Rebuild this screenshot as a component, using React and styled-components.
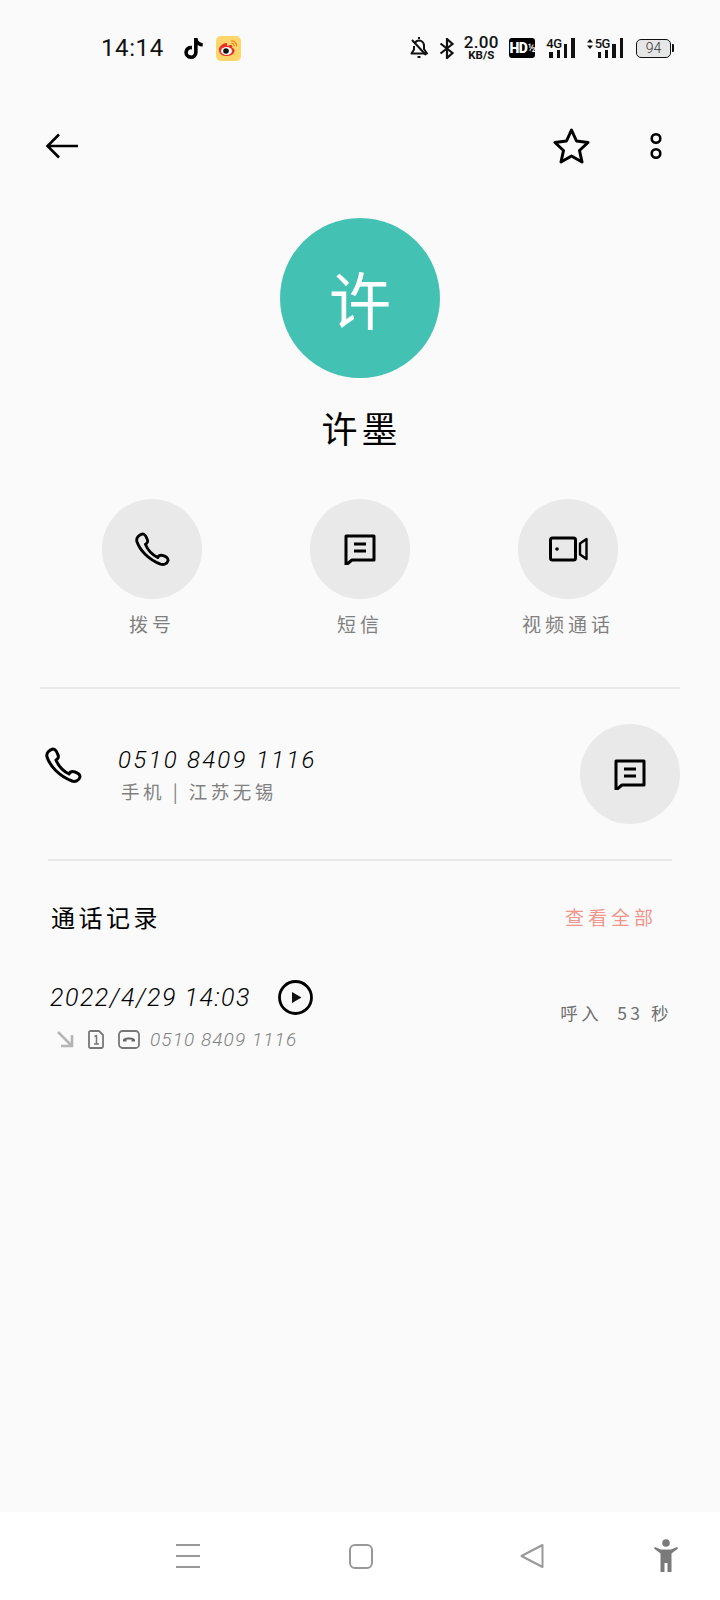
import React from 'react'
import styled, { createGlobalStyle } from 'styled-components'
import { FaTiktok } from 'react-icons/fa'

const Global = createGlobalStyle`
    html, body { margin: 0; padding: 0; background: #fafafa; }
    body { font-family: "Noto Sans CJK SC", "Noto Sans", sans-serif; }
`

const Page = styled.div`
    width: 720px;
    height: 1600px;
    background: #fafafa;
    display: flex;
    flex-direction: column;
    overflow: hidden;
    color: #000;
`

const StatusBar = styled.div`
    height: 96px;
    flex: none;
    display: flex;
    align-items: center;
    padding: 0 46px 0 101px;
`

const Time = styled.span`
    font-family: Roboto, sans-serif;
    font-size: 24px;
    letter-spacing: 0.6px;
    color: #111;
    margin-right: 19px;
`

const StatusRight = styled.div`
    margin-left: auto;
    display: flex;
    align-items: center;
`

const Speed = styled.div`
    width: 36px;
    margin: 0 10px 0 8px;
    display: flex;
    flex-direction: column;
    align-items: center;
    font-family: Roboto, sans-serif;
    color: #111;
    line-height: 1;
`

const SpeedValue = styled.span`
    font-size: 17px;
    font-weight: 500;
    letter-spacing: 0.3px;
    height: 15px;
    line-height: 15px;
`

const SpeedUnit = styled.span`
    font-size: 11.5px;
    font-weight: 700;
    height: 11px;
    line-height: 11px;
`

const HdBadge = styled.div`
    width: 26px;
    height: 20px;
    border-radius: 3px;
    background: #000;
    color: #fff;
    display: flex;
    align-items: center;
    justify-content: center;
    font-family: Roboto, sans-serif;
    font-size: 14px;
    font-weight: 900;
    letter-spacing: -0.6px;
    margin-right: 11px;
`

const HdFraction = styled.span`
    font-size: 10px;
    font-weight: 700;
    margin-left: 1px;
`

const Signal = styled.div`
    display: flex;
    align-items: flex-end;
    height: 20px;
    margin-right: ${p => p.$gap}px;
`

const SignalLabel = styled.span`
    align-self: flex-start;
    display: flex;
    align-items: center;
    gap: 2px;
    font-family: Roboto, sans-serif;
    font-size: 13px;
    font-weight: 500;
    letter-spacing: -0.5px;
    line-height: 12px;
    margin-right: -16px;
    color: #111;
`

const SignalBar = styled.span`
    width: 3.4px;
    height: ${p => p.$h}px;
    background: #111;
    margin-left: 3.9px;
`

const Battery = styled.div`
    display: flex;
    align-items: center;
`

const BatteryBody = styled.div`
    width: 33px;
    height: 17px;
    border: 1.5px solid #111;
    border-radius: 5px;
    background: #e6e6e6;
    font-family: Roboto, sans-serif;
    font-size: 14px;
    font-weight: 300;
    color: #333;
    display: flex;
    align-items: center;
    justify-content: center;
`

const BatteryNub = styled.span`
    width: 2px;
    height: 8px;
    background: #111;
    margin-left: 1px;
    border-radius: 0 1px 1px 0;
`

const Header = styled.div`
    height: 100px;
    flex: none;
    display: flex;
    align-items: center;
    padding: 0 58px 0 45px;
`

const HeaderRight = styled.div`
    margin-left: auto;
    display: flex;
    align-items: center;
    gap: 60px;
`

const Profile = styled.div`
    display: flex;
    flex-direction: column;
    align-items: center;
    padding-top: 22px;
`

const Avatar = styled.div`
    width: 160px;
    height: 160px;
    border-radius: 50%;
    background: #43c2b4;
    color: #fff;
    font-size: 62px;
    display: flex;
    align-items: center;
    justify-content: center;
`

const Name = styled.div`
    margin-top: 19px;
    height: 60px;
    line-height: 60px;
    font-size: 36px;
    letter-spacing: 4px;
    padding-left: 3px;
`

const Actions = styled.div`
    margin: 42px 48px 0;
    display: grid;
    grid-template-columns: repeat(3, 208px);
`

const Action = styled.div`
    display: flex;
    flex-direction: column;
    align-items: center;
`

const RoundButton = styled.div`
    width: 100px;
    height: 100px;
    flex: none;
    border-radius: 50%;
    background: #e9e9e9;
    display: flex;
    align-items: center;
    justify-content: center;
`

const ActionLabel = styled.span`
    margin-top: 10px;
    height: 30px;
    line-height: 30px;
    font-size: 19px;
    letter-spacing: 4px;
    color: #808080;
`

const Divider = styled.div`
    height: 2px;
    flex: none;
    background: #e8e8e8;
    margin: ${p => p.$top}px ${p => p.$right}px 0 ${p => p.$left}px;
`

const Contact = styled.div`
    margin-top: 35px;
    height: 100px;
    display: flex;
    padding: 0 40px 0 45px;
    align-items: flex-start;
`

const ContactIcon = styled.div`
    width: 37px;
    height: 37px;
    margin-top: 23px;
    flex: none;
`

const ContactText = styled.div`
    margin: 22px 0 0 36px;
    flex: 1;
    display: flex;
    flex-direction: column;
`

const Number = styled.span`
    height: 28px;
    line-height: 28px;
    font-family: Roboto, sans-serif;
    font-style: italic;
    font-weight: 300;
    font-size: 24px;
    letter-spacing: 2.3px;
    color: #000;
`

const Location = styled.span`
    margin: 3px 0 0 3px;
    height: 28px;
    line-height: 28px;
    font-size: 18.5px;
    letter-spacing: 3.5px;
    color: #808080;
`

const HistoryHead = styled.div`
    margin-top: 37px;
    height: 36px;
    display: flex;
    align-items: center;
    justify-content: space-between;
    padding: 0 63px 0 51px;
`

const HistoryTitle = styled.span`
    font-size: 24px;
    letter-spacing: 3.5px;
`

const ViewAll = styled.span`
    font-size: 19px;
    letter-spacing: 4px;
    color: #f0968c;
`

const Record = styled.div`
    margin-top: 46px;
    display: flex;
    align-items: center;
    justify-content: space-between;
    padding: 0 48px 0 50px;
`

const RecordMain = styled.div`
    display: flex;
    flex-direction: column;
    gap: 13px;
`

const RecordTop = styled.div`
    height: 34px;
    display: flex;
    align-items: center;
    gap: 27px;
`

const RecordDate = styled.span`
    font-family: Roboto, sans-serif;
    font-style: italic;
    font-weight: 300;
    font-size: 25px;
    letter-spacing: 1.5px;
    white-space: nowrap;
`

const RecordSub = styled.div`
    height: 24px;
    display: flex;
    align-items: center;
    padding-left: 7px;
`

const SubNumber = styled.span`
    margin-left: 10px;
    font-family: Roboto, sans-serif;
    font-style: italic;
    font-weight: 300;
    font-size: 19px;
    letter-spacing: 1.1px;
    color: #808080;
    white-space: nowrap;
`

const Duration = styled.span`
    margin-bottom: 7px;
    font-size: 17.5px;
    letter-spacing: 3.5px;
    color: #707070;
    white-space: pre;
`

const NavBar = styled.div`
    margin-top: auto;
    height: 88px;
    flex: none;
    background: #fff;
    display: flex;
    align-items: center;
    padding: 0 42px 0 176px;
`

const NavSlot = styled.div`
    width: ${p => p.$w}px;
    flex: none;
    display: flex;
    align-items: center;
`

const PhoneGlyph = ({ size = 37, sw = 3 }) => (
    <svg width={size} height={size} viewBox="0 0 37 37" fill="none" stroke="#000" strokeWidth={sw} strokeLinejoin="round">
        <path d="M8 2C4 3 1 6 2 10C5 19 14 29 27 34C30 35 34 34 35 30C35 28 33 26 30 25C27 24 25 25 24 27C18 24 13 18 11 13C13 12 14 10 13 8C12 5 10 2 8 2Z" />
    </svg>
)

const MessageGlyph = () => (
    <svg width="32" height="31" viewBox="0 0 32 31" fill="none" stroke="#000" strokeWidth="3">
        <path d="M2 2H30V26H8L2 31Z" strokeLinejoin="round" />
        <path d="M10 10H22M10 17H22" />
    </svg>
)

const VideoGlyph = () => (
    <svg width="39" height="26" viewBox="0 0 39 26" fill="none" stroke="#000" strokeWidth="3" strokeLinejoin="round">
        <rect x="1.500" y="2" width="25" height="22" rx="2" />
        <path d="M37.500 3V23L31 18.500V7.500Z" strokeWidth="2.400" />
        <circle cx="8" cy="13" r="1.800" fill="#000" stroke="none" />
    </svg>
)

const WeiboLogo = () => (
    <svg width="25" height="25" viewBox="0 0 25 25">
        <rect width="25" height="25" rx="5" fill="#fdd56b" />
        <path d="M10 7C5 8 2 12 3 15C4 19 8 20.500 12 20C16 19.500 19 17 18.500 14C18 12.500 17 12 16 11.500C17 9.500 15.500 8.500 13 9.500C12 10 11 10 11 9C11.500 7.500 11 7 10 7Z" fill="#e6332a" />
        <ellipse cx="10.500" cy="15" rx="5.500" ry="4" fill="#fff" />
        <circle cx="10" cy="15" r="2.800" fill="#111" />
        <path d="M15 5C18 4.500 21 7 20.500 10.500M15.500 7.500C17 7.300 18.500 8.500 18.200 10" fill="none" stroke="#f08a24" strokeWidth="1.200" />
    </svg>
)

const BellOffGlyph = () => (
    <svg width="18" height="22" viewBox="0 0 18 22" fill="none" stroke="#111" strokeWidth="2" strokeLinejoin="round">
        <path d="M5 6C6 4 7.500 3.500 9 3.500C12 3.500 14 6 14 9V12L17 16.500H1.500L4 12.500V9" />
        <path d="M8 1H10M7.500 20H10.500M2 3L16 18" />
    </svg>
)

const BluetoothGlyph = () => (
    <svg width="16" height="21" viewBox="0 0 16 21" fill="none" stroke="#111" strokeWidth="2.200">
        <path d="M1.500 5.500L13.500 15L8 20V1L13.500 6L1.500 15.500" />
    </svg>
)

const UpDownGlyph = () => (
    <svg width="6" height="10" viewBox="0 0 6 10" fill="#111">
        <path d="M3 0L6 3.500H0ZM3 10L0 6.500H6Z" />
    </svg>
)

const BackGlyph = () => (
    <svg width="34" height="26" viewBox="0 0 34 26" fill="none" stroke="#000" strokeWidth="2.600">
        <path d="M33 13H3M14 1.500L2.500 13L14 24.500" />
    </svg>
)

const StarGlyph = () => (
    <svg width="37" height="36" viewBox="0 0 37 36" fill="none" stroke="#000" strokeWidth="3" strokeLinejoin="round">
        <path d="M18.500 2L23.500 13L35 14.500L26.500 22.500L29 34L18.500 28L8 34L10.500 22.500L2 14.500L13.500 13Z" />
    </svg>
)

const DotsGlyph = () => (
    <svg width="12" height="28" viewBox="0 0 12 28" fill="none" stroke="#000" strokeWidth="2.600">
        <circle cx="6" cy="6.500" r="4.300" />
        <circle cx="6" cy="21.500" r="4.300" />
    </svg>
)

const PlayGlyph = () => (
    <svg width="35" height="35" viewBox="0 0 35 35">
        <circle cx="17.500" cy="17.500" r="16" fill="none" stroke="#000" strokeWidth="2.800" />
        <path d="M14 12L23.500 17.500L14 23Z" fill="#111" />
    </svg>
)

const IncomingGlyph = () => (
    <svg width="17" height="17" viewBox="0 0 17 17" fill="none" stroke="#b5b5b5" strokeWidth="2.600">
        <path d="M1 1L15 15M15 4V15H4" />
    </svg>
)

const SimGlyph = () => (
    <svg width="16" height="19" viewBox="0 0 16 19" fill="none" stroke="#777" strokeWidth="1.800" strokeLinejoin="round" style={{ marginLeft: 14 }}>
        <path d="M1 2.500C1 1.500 1.500 1 2.500 1H11L15 5V16.500C15 17.500 14.500 18 13.500 18H2.500C1.500 18 1 17.500 1 16.500Z" />
        <path d="M6.500 6.500L8.500 5.500V14M6 14H11" strokeWidth="1.500" />
    </svg>
)

const RecordedGlyph = () => (
    <svg width="22" height="19" viewBox="0 0 22 19" fill="none" stroke="#777" strokeWidth="1.800" style={{ marginLeft: 14 }}>
        <rect x="1" y="1" width="20" height="17" rx="3.500" />
        <path d="M5 10C5 6.500 17 6.500 17 10V11.500H13.500V9.500H8.500V11.500H5Z" fill="#666" stroke="none" />
    </svg>
)

const MenuGlyph = () => (
    <svg width="24" height="24" viewBox="0 0 24 24" stroke="#999" strokeWidth="2">
        <path d="M0 1H24M0 12H24M0 23H24" />
    </svg>
)

const HomeGlyph = () => (
    <svg width="24" height="25" viewBox="0 0 24 25" fill="none" stroke="#999" strokeWidth="2">
        <rect x="1" y="1" width="22" height="23" rx="5" />
    </svg>
)

const ReturnGlyph = () => (
    <svg width="24" height="26" viewBox="0 0 24 26" fill="none" stroke="#999" strokeWidth="2" strokeLinejoin="round">
        <path d="M22.500 2V24L1.500 13Z" />
    </svg>
)

const PersonGlyph = () => (
    <svg width="26" height="34" viewBox="0 0 26 34" fill="#7a7a7a">
        <circle cx="13" cy="4" r="3.800" />
        <path d="M1 9.500L2 8L8 10.500H18L24 8L25 9.500L18.500 14.500V33H14.500V24H11.500V33H7.500V14.500Z" />
    </svg>
)

const SignalBars = ({ label, gap, updown }) => (
    <Signal $gap={gap}>
        <SignalLabel>
            {updown && <UpDownGlyph />}
            {label}
        </SignalLabel>
        <SignalBar $h={6} />
        <SignalBar $h={8} />
        <SignalBar $h={14} />
        <SignalBar $h={20} />
    </Signal>
)

export default function App() {
    return (
        <Page>
            <Global />
            <StatusBar>
                <Time>14:14</Time>
                <FaTiktok size={21} color="#000" style={{ marginRight: 12 }} />
                <WeiboLogo />
                <StatusRight>
                    <BellOffGlyph />
                    <span style={{ width: 11 }} />
                    <BluetoothGlyph />
                    <Speed>
                        <SpeedValue>2.00</SpeedValue>
                        <SpeedUnit>KB/S</SpeedUnit>
                    </Speed>
                    <HdBadge>HD<HdFraction>½</HdFraction></HdBadge>
                    <SignalBars label="4G" gap={12} />
                    <SignalBars label="5G" gap={13} updown />
                    <Battery>
                        <BatteryBody>94</BatteryBody>
                        <BatteryNub />
                    </Battery>
                </StatusRight>
            </StatusBar>

            <Header>
                <BackGlyph />
                <HeaderRight>
                    <StarGlyph />
                    <DotsGlyph />
                </HeaderRight>
            </Header>

            <Profile>
                <Avatar>许</Avatar>
                <Name>许墨</Name>
            </Profile>

            <Actions>
                <Action>
                    <RoundButton><PhoneGlyph size={35} /></RoundButton>
                    <ActionLabel>拨号</ActionLabel>
                </Action>
                <Action>
                    <RoundButton><MessageGlyph /></RoundButton>
                    <ActionLabel>短信</ActionLabel>
                </Action>
                <Action>
                    <RoundButton><VideoGlyph /></RoundButton>
                    <ActionLabel>视频通话</ActionLabel>
                </Action>
            </Actions>

            <Divider $top={48} $left={40} $right={40} />

            <Contact>
                <ContactIcon><PhoneGlyph /></ContactIcon>
                <ContactText>
                    <Number>0510 8409 1116</Number>
                    <Location>手机 | 江苏无锡</Location>
                </ContactText>
                <RoundButton><MessageGlyph /></RoundButton>
            </Contact>

            <Divider $top={35} $left={48} $right={48} />

            <HistoryHead>
                <HistoryTitle>通话记录</HistoryTitle>
                <ViewAll>查看全部</ViewAll>
            </HistoryHead>

            <Record>
                <RecordMain>
                    <RecordTop>
                        <RecordDate>2022/4/29 14:03</RecordDate>
                        <PlayGlyph />
                    </RecordTop>
                    <RecordSub>
                        <IncomingGlyph />
                        <SimGlyph />
                        <RecordedGlyph />
                        <SubNumber>0510 8409 1116</SubNumber>
                    </RecordSub>
                </RecordMain>
                <Duration>呼入  53 秒</Duration>
            </Record>

            <NavBar>
                <NavSlot $w={173}><MenuGlyph /></NavSlot>
                <NavSlot $w={171}><HomeGlyph /></NavSlot>
                <NavSlot $w={133}><ReturnGlyph /></NavSlot>
                <NavSlot $w={26}><PersonGlyph /></NavSlot>
            </NavBar>
        </Page>
    )
}
